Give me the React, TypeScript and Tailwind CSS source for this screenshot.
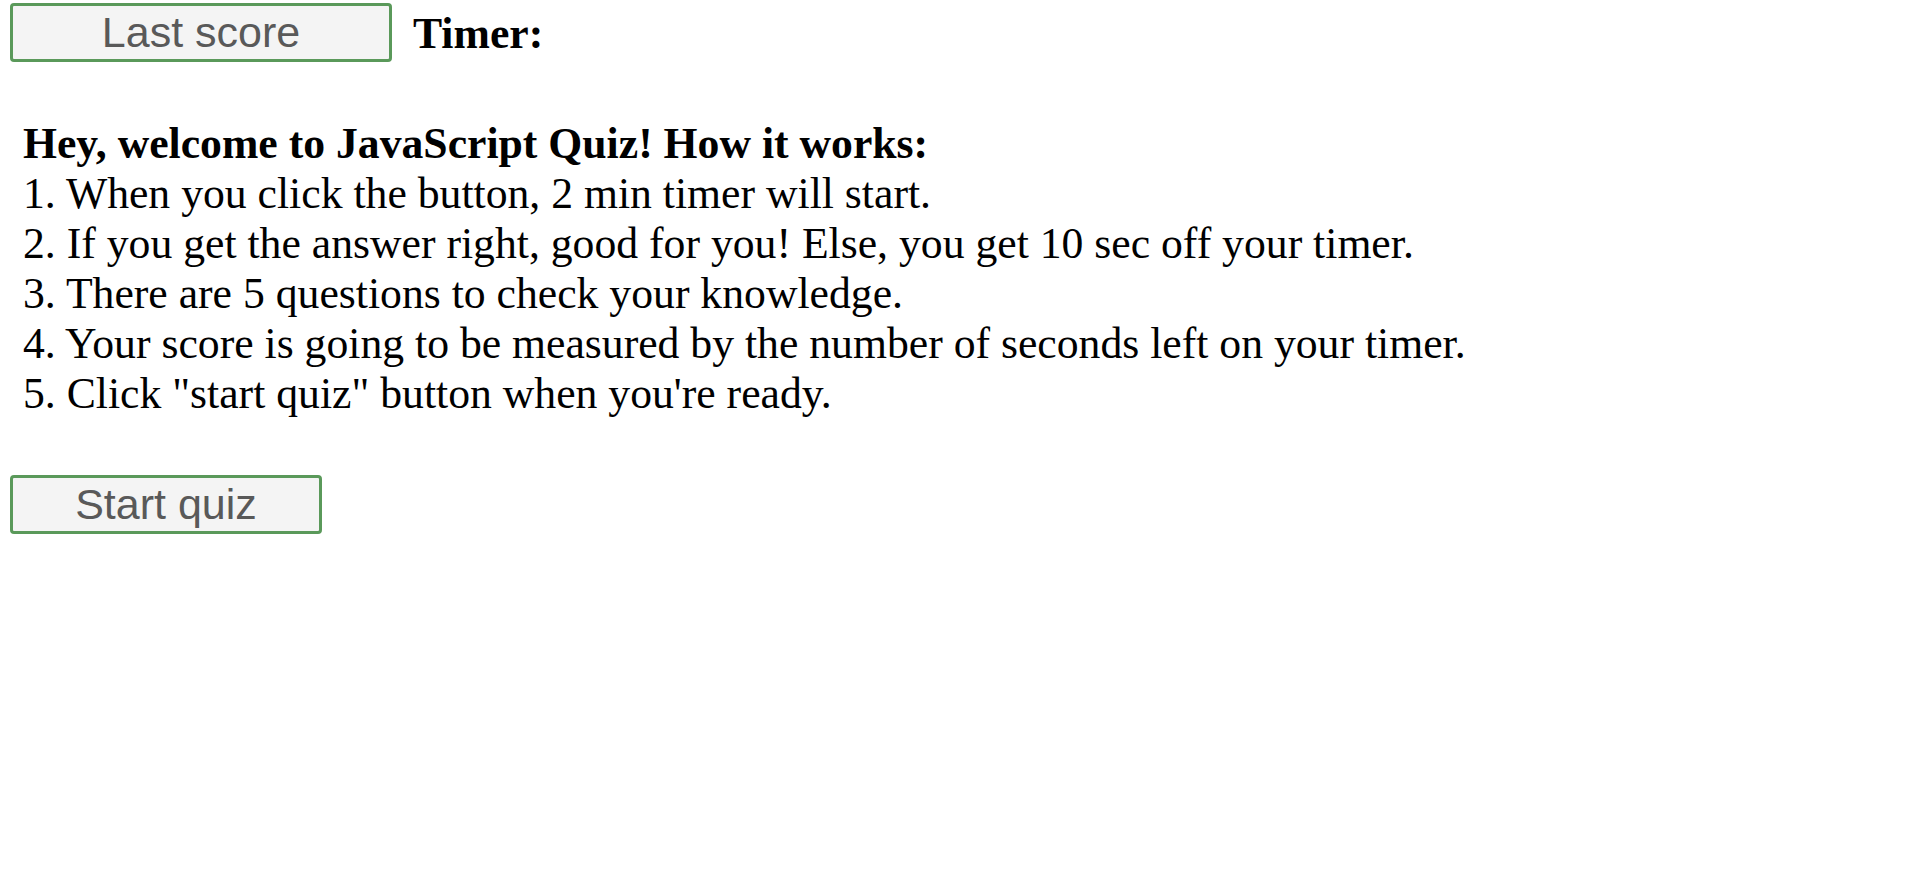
import React from "react";

export default function App() {
  return (
    <div className="min-h-screen bg-white font-['Liberation_Serif',serif] text-[43.7px] leading-[50px] text-black">
      <div className="flex items-center pt-[3px] pl-[10px]">
        <button className="w-[382px] h-[59px] border-[3px] border-[#5a995a] rounded-[4px] bg-[#f4f4f4] text-[#595959] font-['Liberation_Sans',sans-serif] text-[43px] leading-none">
          Last score
        </button>
        <span className="ml-[21px] font-bold">Timer:</span>
      </div>
      <div className="mt-[56px] pl-[23px]">
        <div className="font-bold">Hey, welcome to JavaScript Quiz! How it works:</div>
        <div>1. When you click the button, 2 min timer will start.</div>
        <div>2. If you get the answer right, good for you! Else, you get 10 sec off your timer.</div>
        <div>3. There are 5 questions to check your knowledge.</div>
        <div>4. Your score is going to be measured by the number of seconds left on your timer.</div>
        <div>5. Click "start quiz" button when you're ready.</div>
      </div>
      <div className="mt-[57px] pl-[10px]">
        <button className="w-[312px] h-[59px] border-[3px] border-[#5a995a] rounded-[4px] bg-[#f4f4f4] text-[#595959] font-['Liberation_Sans',sans-serif] text-[43px] leading-none">
          Start quiz
        </button>
      </div>
    </div>
  );
}
